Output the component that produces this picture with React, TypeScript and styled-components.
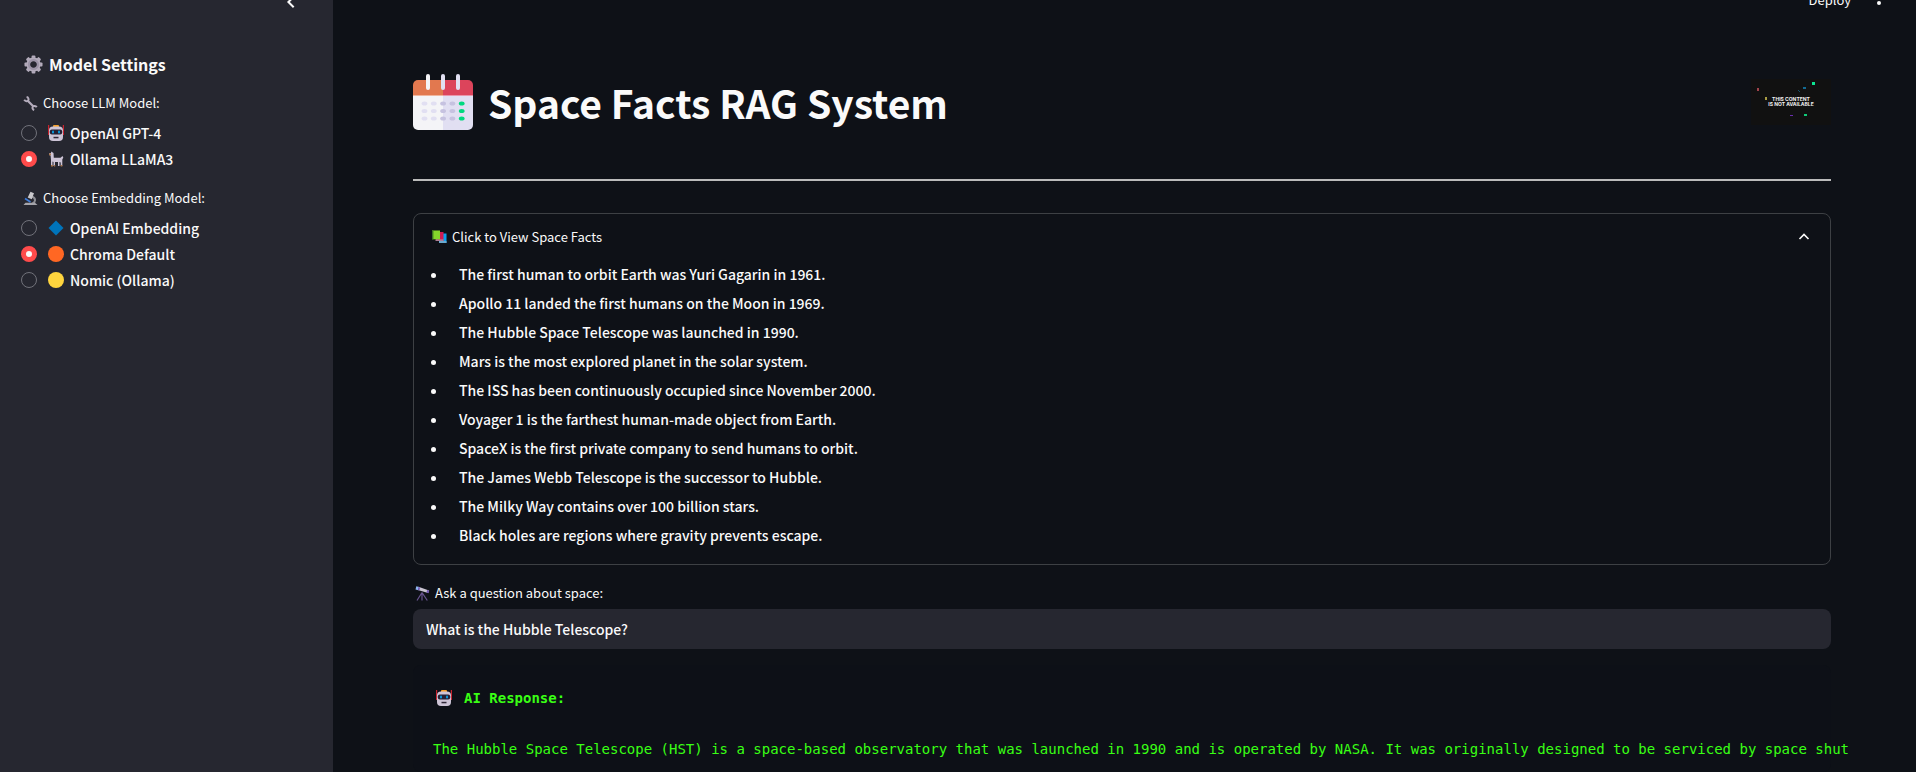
import React, { useState } from "react";
import styled, { createGlobalStyle } from "styled-components";

const GlobalStyle = createGlobalStyle`
  *, *::before, *::after { box-sizing: border-box; }
  body {
    margin: 0;
    background: #0e1117;
    color: #fafafa;
    font: 500 14px/20px "Noto Sans CJK JP", "Noto Sans", sans-serif;
  }
  h1, h2, h3, p, ul, fieldset, legend { margin: 0; padding: 0; border: 0; }
  svg { display: block; flex: none; }
`;

const Page = styled.div`
  display: flex;
  min-height: 100vh;
  overflow: hidden;
`;

const Sidebar = styled.aside`
  flex: 0 0 333px;
  padding: 0 21px;
  background: #262730;
`;

const SidebarTop = styled.div`
  display: flex;
  justify-content: flex-end;
  height: 52px;
  padding-right: 9px;
`;

const IconButton = styled.button`
  width: 24px;
  height: 24px;
  margin-top: -10px;
  padding: 0;
  border: 0;
  background: none;
  color: #fafafa;
  cursor: pointer;
`;

const SidebarTitle = styled.h2`
  display: flex;
  align-items: center;
  gap: 6px;
  padding-left: 3px;
  margin-bottom: 17px;
  font-size: 16px;
  line-height: 24px;
  font-weight: 700;
`;

const Group = styled.fieldset`
  margin-bottom: 16px;
`;

const IconLabel = styled.span`
  display: flex;
  align-items: center;
  gap: 5px;
  font-size: 13px;
  line-height: 20px;
  font-weight: 400;
`;

const Legend = styled.legend`
  padding: 0 0 7px 2px;
`;

const Option = styled.label`
  display: flex;
  align-items: center;
  gap: 6px;
  height: 26px;
  font-size: 14px;
  cursor: pointer;
`;

const Radio = styled.input`
  appearance: none;
  width: 16px;
  height: 16px;
  margin: 0 5px 0 0;
  border: 1px solid #71727a;
  border-radius: 50%;
  &:checked {
    border: 5px solid #ff4b4b;
    background: #fafafa;
  }
`;

const Main = styled.main`
  flex: 1;
  min-width: 0;
  display: flex;
  flex-direction: column;
  margin-right: 5px;
  padding: 0 80px;
  overflow: hidden;
`;

const Toolbar = styled.header`
  display: flex;
  justify-content: flex-end;
  align-items: center;
  gap: 16px;
  height: 24px;
  margin: -12px -60px 60px 0;
`;

const DeployButton = styled.button`
  padding: 0;
  border: 0;
  background: none;
  color: #fafafa;
  font: inherit;
  font-size: 13px;
  font-weight: 400;
  line-height: 20px;
  cursor: pointer;
`;

const MenuButton = styled(IconButton)`
  margin-top: 0;
`;

const Banner = styled.div`
  display: flex;
  align-items: center;
  gap: 15px;
  height: 60px;
`;

const Title = styled.h1`
  flex: 1;
  font-size: 39px;
  line-height: 60px;
  font-weight: 700;
`;

const Divider = styled.hr`
  width: 100%;
  height: 2px;
  margin: 47px 0 32px;
  border: 0;
  background: #bbbbbb;
`;

const Expander = styled.details`
  padding: 0 18px 14px;
  border: 1px solid #3d4044;
  border-radius: 8px;
`;

const Summary = styled.summary`
  display: flex;
  justify-content: space-between;
  align-items: center;
  height: 46px;
  list-style: none;
  cursor: pointer;
`;

const FactList = styled.ul`
  padding-left: 16px;
  font-size: 14px;
  line-height: 29px;
`;

const Fact = styled.li`
  padding-left: 11px;
`;

const QuestionLabel = styled.label`
  margin: 18px 0 6px;
  padding-left: 2px;
`;

const QuestionInput = styled.input`
  width: 100%;
  height: 40px;
  padding: 0 13px;
  border: 0;
  border-radius: 8px;
  background: #262730;
  color: #fafafa;
  font: inherit;
  font-size: 14px;
`;

const Response = styled.section`
  flex: 1;
  margin-top: 16px;
  padding: 21px 20px 11px;
  border-radius: 8px;
  background: #0d1017;
  color: #39ff14;
  font-family: "DejaVu Sans Mono", monospace;
  font-size: 14px;
  font-weight: 400;
  line-height: 24px;
`;

const ResponseTitle = styled.h3`
  display: flex;
  align-items: center;
  gap: 12px;
  padding-left: 3px;
  margin-bottom: 27px;
  font-size: 14px;
  font-weight: 700;
`;

const ResponseText = styled.p`
  white-space: nowrap;
`;

const GearIcon = () => (
  <svg width="19" height="19" viewBox="-10 -10 20 20" aria-hidden="true">
    {[0, 45, 90, 135, 180, 225, 270, 315].map((a) => (
      <rect key={a} x="-2" y="-9.5" width="4" height="5" rx="1" fill="#b4acbc" transform={`rotate(${a})`} />
    ))}
    <circle r="5.4" fill="none" stroke="#9b93a6" strokeWidth="3.8" />
    <circle r="6.6" fill="none" stroke="#b4acbc" strokeWidth="1.4" />
  </svg>
);

const WrenchIcon = () => (
  <svg width="15" height="15" viewBox="0 0 15 15" aria-hidden="true">
    <path d="M4.5 4.5 10.5 10.5" stroke="#b4acbc" strokeWidth="2.2" />
    <path d="M1.2 3.8C2.4 5.6 4.6 5.6 5.3 4.3 6 3 5.3 1.4 3.6 1.1M13.8 11.2C12.6 9.6 10.6 9.5 9.8 10.7 9 12 9.6 13.5 11.2 14" fill="none" stroke="#b4acbc" strokeWidth="2" />
  </svg>
);

const MicroscopeIcon = () => (
  <svg width="15" height="15" viewBox="0 0 15 15" aria-hidden="true">
    <path d="M9 5.5C13.5 7.5 12.5 11 9.5 12.5" fill="none" stroke="#8d8d93" strokeWidth="2" />
    <path d="M7.5 .8 11 2.3 8.7 8.2 4.7 6.5Z" fill="#c9c8cc" />
    <path d="M2 7.5 7.5 11" stroke="#3f7ddb" strokeWidth="1.6" />
    <path d="M2.5 11.8H12L14.5 14H.5Z" fill="#a5a4aa" />
  </svg>
);

const RobotIcon = () => (
  <svg width="16" height="16" viewBox="0 0 16 16" aria-hidden="true">
    <path d="M0 0H1.2V10H0ZM14.8 0H16V10H14.8Z" fill="#c9242f" />
    <rect x="5" y="0" width="6" height="3" rx="1" fill="#f5a02c" />
    <rect x="1" y="1.6" width="14" height="14.4" rx="4" fill="#cdc4d6" />
    <rect x="1.8" y="4.5" width="12.4" height="5" rx="2" fill="#262033" />
    <rect x="4" y="5.4" width="2" height="3" rx="1" fill="#0a9be0" />
    <rect x="10" y="5.4" width="2" height="3" rx="1" fill="#0a9be0" />
    <rect x="5.5" y="11.8" width="5" height="1.5" fill="#302838" />
  </svg>
);

const LlamaIcon = () => (
  <svg width="16" height="16" viewBox="0 0 16 16" aria-hidden="true">
    <path d="M3.2 .5 5.5 2 5.8 6.8H12.5L14.5 5 15.3 6.5 14.3 8.5V15H12.7V11.5L11.5 11V15H10V11H7V15H5.5V11L4.5 10.5V15H3V9L2.6 4.5 1 4V2.5L3 2Z" fill="#cdc4d6" />
    <path d="M1 2.5H3V4.3H1ZM3 14H5V15.5H3ZM6 14H7.2V15.5H6ZM12.7 14H14.3V15.5H12.7Z" fill="#a97548" />
  </svg>
);

const DiamondIcon = () => (
  <svg width="16" height="16" viewBox="0 0 16 16" aria-hidden="true">
    <path d="M8 .5 15.5 8 8 15.5 .5 8Z" fill="#0074ba" />
  </svg>
);

const DotIcon = ({ color }: { color: string }) => (
  <svg width="16" height="16" viewBox="0 0 16 16" aria-hidden="true">
    <circle cx="8" cy="8" r="8" fill={color} />
  </svg>
);

const CalendarIcon = () => (
  <svg width="60" height="56" viewBox="0 0 60 56" aria-hidden="true">
    <path d="M30 6H5a5 5 0 0 0-5 5V22H30Z" fill="#e2784f" />
    <path d="M30 6H55a5 5 0 0 1 5 5V22H30Z" fill="#dc445b" />
    <path d="M0 21H30V56H5a5 5 0 0 1-5-5Z" fill="#f4f4f7" />
    <path d="M60 21H30V56H55a5 5 0 0 0 5-5Z" fill="#e1dff2" />
    <path d="M0 21H30V22H0Z" fill="#f0b59d" />
    <path d="M30 21H60V22H30Z" fill="#ea94a9" />
    {[15, 30, 45].map((x) => (
      <path key={x} d={`M${x} 2V14`} stroke={x === 15 ? "#f4f4f7" : "#e1dff2"} strokeWidth="4" strokeLinecap="round" />
    ))}
    {[29.5, 37, 44.5].map((y) => (
      <g key={y}>
        {["#e1dff2", "#e1dff2", "#c6c2e0", "#c6c2e0", "#00d97f"].map((c, i) => (
          <ellipse key={i} cx={11.5 + i * 9.3} cy={y} rx="2.9" ry="2" fill={c} />
        ))}
      </g>
    ))}
  </svg>
);

const UnavailableImage = () => (
  <svg width="80" height="46" viewBox="0 0 80 46" role="img" aria-label="This content is not available">
    <rect width="80" height="46" fill="#111111" />
    <g fill="#f2f2f2" fontFamily="Inter, sans-serif" fontSize="5" fontWeight="700" textAnchor="middle">
      <text x="40" y="22">THIS CONTENT</text>
      <text x="40" y="27">IS NOT AVAILABLE</text>
    </g>
    <path d="M6 9H8V12H6Z" fill="#a0434b" />
    <path d="M14 18H16V21H14Z" fill="#a99d43" />
    <path d="M61 3H64V6H61Z" fill="#0ce592" />
    <path d="M52 8H55V10H52Z" fill="#126a92" />
    <path d="M47 11 49 13" stroke="#14506a" />
    <path d="M39 36H42V37H39Z" fill="#6a2eb0" />
    <path d="M53 35H56V37H53Z" fill="#10c878" />
  </svg>
);

const BooksIcon = () => (
  <svg width="15" height="14" viewBox="0 0 15 14" aria-hidden="true">
    <path d="M7 3.5H14.5V13H7Z" fill="#0aa0f0" />
    <path d="M7 11H14.5V13H7Z" fill="#6aa9cf" />
    <path d="M4 2H11.5V11H4Z" fill="#d01c53" />
    <path d="M3.5 9.3H11.5V11H3.5Z" fill="#ad7d95" />
    <path d="M0 .5H8V9.3H0Z" fill="#86d62b" />
    <path d="M0 .5H1.4V9.3H0Z" fill="#3d7423" />
  </svg>
);

const TelescopeIcon = () => (
  <svg width="15" height="15" viewBox="0 0 15 15" aria-hidden="true">
    <path d="M7 6.5 2 14.5M7 6.5V14.5M7 6.5 12.3 14.5" stroke="#68548f" strokeWidth="1.2" />
    <path d="M3.5 .8 14 4.5 13.2 7 2.8 4Z" fill="#c9c4d2" />
    <path d="M1.3 .3 4.1 1 3.2 4.3 .5 3.5Z" fill="#8fb8f0" />
    <path d="M3.5 1 5.1 1.5 4.3 4.5 2.8 4Z" fill="#7155b5" />
    <path d="M12.1 4 14.3 4.7 13.5 7.3 11.5 6.6Z" fill="#7155b5" />
  </svg>
);

const FACTS = [
  "The first human to orbit Earth was Yuri Gagarin in 1961.",
  "Apollo 11 landed the first humans on the Moon in 1969.",
  "The Hubble Space Telescope was launched in 1990.",
  "Mars is the most explored planet in the solar system.",
  "The ISS has been continuously occupied since November 2000.",
  "Voyager 1 is the farthest human-made object from Earth.",
  "SpaceX is the first private company to send humans to orbit.",
  "The James Webb Telescope is the successor to Hubble.",
  "The Milky Way contains over 100 billion stars.",
  "Black holes are regions where gravity prevents escape.",
];

const LLM_OPTIONS = [
  { name: "OpenAI GPT-4", icon: <RobotIcon /> },
  { name: "Ollama LLaMA3", icon: <LlamaIcon /> },
];

const EMBEDDING_OPTIONS = [
  { name: "OpenAI Embedding", icon: <DiamondIcon /> },
  { name: "Chroma Default", icon: <DotIcon color="#ff6723" /> },
  { name: "Nomic (Ollama)", icon: <DotIcon color="#ffd53e" /> },
];

interface RadioGroupProps {
  name: string;
  label: string;
  icon: React.ReactNode;
  options: { name: string; icon: React.ReactNode }[];
}

const RadioGroup = ({ name, label, icon, options }: RadioGroupProps) => {
  const [selected, setSelected] = useState(options[1].name);
  return (
    <Group>
      <Legend>
        <IconLabel>{icon}{label}</IconLabel>
      </Legend>
      {options.map((option) => (
        <Option key={option.name}>
          <Radio
            type="radio"
            name={name}
            checked={selected === option.name}
            onChange={() => setSelected(option.name)}
          />
          {option.icon}
          {option.name}
        </Option>
      ))}
    </Group>
  );
};

export default function App() {
  const [question, setQuestion] = useState("What is the Hubble Telescope?");
  return (
    <>
      <GlobalStyle />
      <Page>
        <Sidebar>
          <SidebarTop>
            <IconButton type="button" aria-label="Collapse sidebar">
              <svg width="24" height="24" viewBox="0 0 24 24" fill="none" stroke="currentColor" strokeWidth="2">
                <path d="M14.7 6.7 9.4 12 14.7 17.3" />
              </svg>
            </IconButton>
          </SidebarTop>
          <SidebarTitle><GearIcon />Model Settings</SidebarTitle>
          <RadioGroup name="llm" label="Choose LLM Model:" icon={<WrenchIcon />} options={LLM_OPTIONS} />
          <RadioGroup name="embedding" label="Choose Embedding Model:" icon={<MicroscopeIcon />} options={EMBEDDING_OPTIONS} />
        </Sidebar>
        <Main>
          <Toolbar>
            <DeployButton type="button">Deploy</DeployButton>
            <MenuButton type="button" aria-label="Main menu">
              <svg width="24" height="24" viewBox="0 0 24 24" fill="currentColor">
                <circle cx="12" cy="3" r="2" />
                <circle cx="12" cy="9" r="2" />
                <circle cx="12" cy="15" r="2" />
              </svg>
            </MenuButton>
          </Toolbar>
          <Banner>
            <CalendarIcon />
            <Title>Space Facts RAG System</Title>
            <UnavailableImage />
          </Banner>
          <Divider />
          <Expander open>
            <Summary>
              <IconLabel><BooksIcon />Click to View Space Facts</IconLabel>
              <svg width="16" height="16" viewBox="0 0 16 16" fill="none" stroke="#fafafa" strokeWidth="1.6" aria-hidden="true">
                <path d="M3.5 10 8 5.5 12.5 10" />
              </svg>
            </Summary>
            <FactList>
              {FACTS.map((fact) => <Fact key={fact}>{fact}</Fact>)}
            </FactList>
          </Expander>
          <QuestionLabel htmlFor="question">
            <IconLabel><TelescopeIcon />Ask a question about space:</IconLabel>
          </QuestionLabel>
          <QuestionInput
            id="question"
            type="text"
            value={question}
            onChange={(event) => setQuestion(event.target.value)}
          />
          <Response>
            <ResponseTitle><RobotIcon />AI Response:</ResponseTitle>
            <ResponseText>
              The Hubble Space Telescope (HST) is a space-based observatory that was launched in 1990 and is operated by NASA. It was originally designed to be serviced by space shut
            </ResponseText>
          </Response>
        </Main>
      </Page>
    </>
  );
}
